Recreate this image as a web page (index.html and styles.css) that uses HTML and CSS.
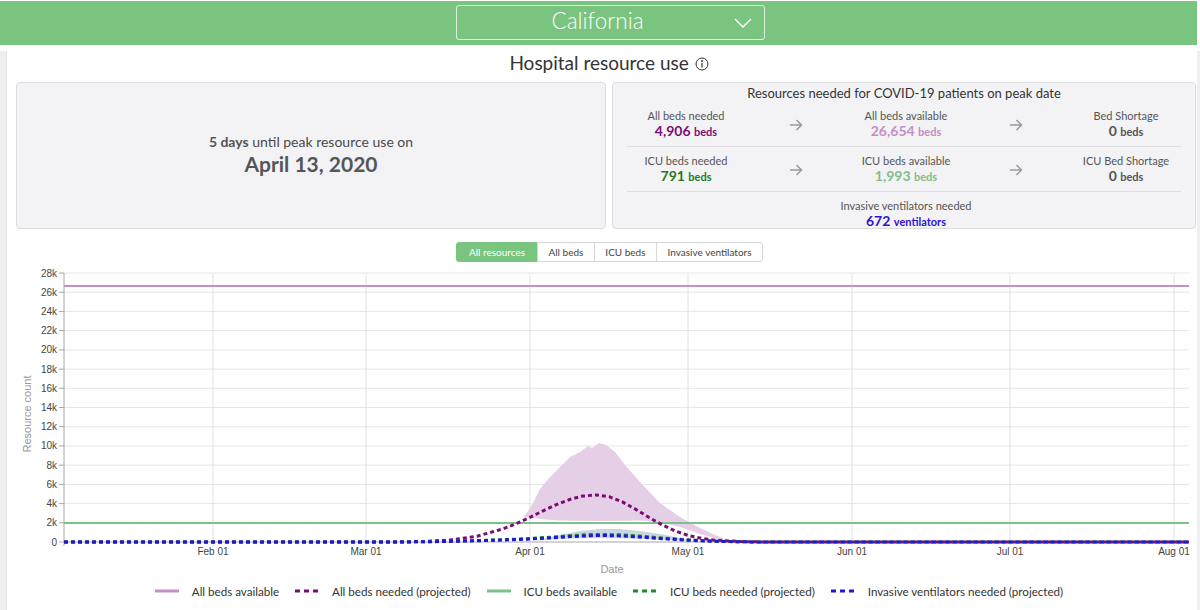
FILE: index.html
```html
<!DOCTYPE html>
<html lang="en">
<head>
<meta charset="utf-8">
<title>Hospital resource use</title>
<link rel="stylesheet" href="styles.css">
</head>
<body>
<div class="app">
  <header class="topbar">
    <div class="select">
      <span class="select-label">California</span>
      <svg class="chev" width="18" height="10" viewBox="0 0 18 10"><polyline points="1,1 9,9 17,1" fill="none" stroke="#fff" stroke-width="1.4"/></svg>
    </div>
  </header>
  <div class="main">
    <main class="panel">
      <h1 class="title">Hospital resource use
        <svg class="info" width="14" height="14" viewBox="0 0 14 14"><circle cx="7" cy="7" r="6" fill="none" stroke="#333" stroke-width="1"/><circle cx="7" cy="4" r="0.9" fill="#333"/><path d="M7 6V10.5" stroke="#333" stroke-width="1.2"/></svg>
      </h1>
      <section class="cards">
        <div class="card peak">
          <div class="peak-line"><b>5 days</b> until peak resource use on</div>
          <div class="peak-date">April 13, 2020</div>
        </div>
        <div class="card needs">
          <div class="needs-title">Resources needed for COVID-19 patients on peak date</div>
          <div class="row">
            <div class="stat"><div class="lbl">All beds needed</div><div class="val c-purple">4,906 <small>beds</small></div></div>
            <div class="arrow"><svg width="14" height="12" viewBox="0 0 14 12"><path d="M1 6H12.5M7.5 1L12.5 6L7.5 11" fill="none" stroke="#9a9a9a" stroke-width="1.5"/></svg></div>
            <div class="stat"><div class="lbl">All beds available</div><div class="val c-lpurple">26,654 <small>beds</small></div></div>
            <div class="arrow"><svg width="14" height="12" viewBox="0 0 14 12"><path d="M1 6H12.5M7.5 1L12.5 6L7.5 11" fill="none" stroke="#9a9a9a" stroke-width="1.5"/></svg></div>
            <div class="stat"><div class="lbl">Bed Shortage</div><div class="val c-gray">0 <small>beds</small></div></div>
          </div>
          <div class="row">
            <div class="stat"><div class="lbl">ICU beds needed</div><div class="val c-green">791 <small>beds</small></div></div>
            <div class="arrow"><svg width="14" height="12" viewBox="0 0 14 12"><path d="M1 6H12.5M7.5 1L12.5 6L7.5 11" fill="none" stroke="#9a9a9a" stroke-width="1.5"/></svg></div>
            <div class="stat"><div class="lbl">ICU beds available</div><div class="val c-lgreen">1,993 <small>beds</small></div></div>
            <div class="arrow"><svg width="14" height="12" viewBox="0 0 14 12"><path d="M1 6H12.5M7.5 1L12.5 6L7.5 11" fill="none" stroke="#9a9a9a" stroke-width="1.5"/></svg></div>
            <div class="stat"><div class="lbl">ICU Bed Shortage</div><div class="val c-gray">0 <small>beds</small></div></div>
          </div>
          <div class="row last">
            <div class="stat"><div class="lbl">Invasive ventilators needed</div><div class="val c-blue">672 <small>ventilators</small></div></div>
          </div>
        </div>
      </section>
      <nav class="tabs">
        <span class="tab active">All resources</span>
        <span class="tab">All beds</span>
        <span class="tab">ICU beds</span>
        <span class="tab">Invasive ventilators</span>
      </nav>
      <svg class="chart" width="1190" height="310" viewBox="7 265 1190 310">
        <path class="grid" d="M64 522.8H1189M64 503.6H1189M64 484.4H1189M64 465.1H1189M64 445.9H1189M64 426.7H1189M64 407.5H1189M64 388.3H1189M64 369.1H1189M64 349.9H1189M64 330.6H1189M64 311.4H1189M64 292.2H1189M64 273H1189"/>
        <path class="vgrid" d="M213 273V546M366 273V546M530 273V546M688 273V546M852 273V546M1010 273V546M1174 273V546"/>
        <path class="axis" d="M64 273V546M59 542H1189M59 522.8H64M59 503.6H64M59 484.4H64M59 465.1H64M59 445.9H64M59 426.7H64M59 407.5H64M59 388.3H64M59 369.1H64M59 349.9H64M59 330.6H64M59 311.4H64M59 292.2H64M59 273H64"/>
        <g class="ylab">
          <text x="57" y="545.5">0</text>
          <text x="57" y="526.3">2k</text>
          <text x="57" y="507.1">4k</text>
          <text x="57" y="487.9">6k</text>
          <text x="57" y="468.6">8k</text>
          <text x="57" y="449.4">10k</text>
          <text x="57" y="430.2">12k</text>
          <text x="57" y="411">14k</text>
          <text x="57" y="391.8">16k</text>
          <text x="57" y="372.6">18k</text>
          <text x="57" y="353.4">20k</text>
          <text x="57" y="334.1">22k</text>
          <text x="57" y="314.9">24k</text>
          <text x="57" y="295.7">26k</text>
          <text x="57" y="276.5">28k</text>
        </g>
        <g class="xlab">
          <text x="213" y="555">Feb 01</text>
          <text x="366" y="555">Mar 01</text>
          <text x="530" y="555">Apr 01</text>
          <text x="688" y="555">May 01</text>
          <text x="852" y="555">Jun 01</text>
          <text x="1010" y="555">Jul 01</text>
          <text x="1174" y="555">Aug 01</text>
        </g>
        <text class="axis-title" x="612" y="573">Date</text>
        <text class="axis-title" x="0" y="0" transform="translate(31 414) rotate(-90)">Resource count</text>

        <path class="band-all" d="M524 517L532 505L540 489L550 477L560 467L570 457L580 452L588 446L592 448L599 443L606 445L615 452L625 465L640 482L660 503L680 517L700 528L715 535L728 540L715 538.5L700 534L680 527L660 522L640 520.5L600 521L560 520.5L545 519.5L532 518Z"/>
        <path class="band-icu" d="M535 541L560 535L580 531L600 529L620 529L640 531L660 534L680 538L698 541.5L680 540.5L660 539.5L640 538.8L600 538L560 538.8Z"/>

        <path class="avail-all" d="M64 286H1189"/>
        <path class="avail-icu" d="M64 523H1189"/>

        <path class="need-all" d="M64 542L398 541.9L424.4 541.4L450.8 539.9L477.2 536.2L503.6 528.7L516.8 523.4L530 517.3L543.2 510.8L556.4 504.6L569.6 499.5L582.8 496.1L596 494.9L609.2 496.7L622.4 501.9L635.6 509.2L648.8 517.3L662 524.8L675.2 531L688.4 535.5L701.6 538.4L714.8 540.2L741.2 541.6L767.6 542L1189 542"/>
        <path class="need-icu" d="M64 542L400 542L440 541.5L480 540.4L510 539.4L530 538.5L550 537.2L570 535.7L590 534.6L605 534.4L620 534.8L640 536.1L660 537.8L680 539.3L700 540.5L720 541.4L750 541.9L780 542L1189 542"/>
        <path class="need-vent" d="M64 542L400 542L440 541.6L480 540.7L510 539.8L530 539L550 537.9L570 536.6L590 535.7L605 535.5L620 535.9L640 537L660 538.5L680 539.8L700 540.8L720 541.5L750 541.9L780 542L1189 542"/>
      </svg>
      <div class="legend">
        <span class="item"><svg width="24" height="4" viewBox="0 0 24 4"><path class="l-avail-all" d="M0 2H24"/></svg>All beds available</span>
        <span class="item"><svg width="24" height="4" viewBox="0 0 24 4"><path class="l-need-all" d="M0 2H24"/></svg>All beds needed (projected)</span>
        <span class="item"><svg width="24" height="4" viewBox="0 0 24 4"><path class="l-avail-icu" d="M0 2H24"/></svg>ICU beds available</span>
        <span class="item"><svg width="24" height="4" viewBox="0 0 24 4"><path class="l-need-icu" d="M0 2H24"/></svg>ICU beds needed (projected)</span>
        <span class="item"><svg width="24" height="4" viewBox="0 0 24 4"><path class="l-need-vent" d="M0 2H24"/></svg>Invasive ventilators needed (projected)</span>
      </div>
    </main>
  </div>
</div>
</body>
</html>
```

FILE: styles.css
```css
* { box-sizing: border-box; }
html, body { margin: 0; padding: 0; }
body {
  width: 1200px;
  height: 610px;
  overflow: hidden;
  background: #fff;
  font-family: Lato, "Noto Sans", "Liberation Sans", sans-serif;
  color: #333;
}
.app { width: 1200px; }

.topbar {
  margin-top: 1px;
  width: 1197px;
  height: 44px;
  background: #79c47f;
  display: flex;
  align-items: center;
  justify-content: center;
  padding-left: 24px;
  padding-bottom: 2px;
}
.select {
  width: 309px;
  height: 35px;
  border: 1px solid rgba(255,255,255,0.75);
  border-radius: 3px;
  display: flex;
  align-items: center;
  padding-right: 12px;
}
.select-label {
  flex: 1;
  text-align: center;
  color: #fff;
  font-size: 22.5px;
  font-weight: 300;
  line-height: 26px;
  padding-bottom: 3px;
  padding-left: 4px;
}
.chev { display: block; margin-top: 2px; }

.main {
  background: #efeff1;
  height: 565px;
}
.panel {
  margin-left: 6px;
  width: 1191px;
  height: 562px;
  background: #fff;
  border-left: 1px solid #e3e3e5;
}
.title {
  margin: 6px 0 0;
  padding-left: 14px;
  height: 24px;
  line-height: 24px;
  text-align: center;
  font-size: 19px;
  font-weight: 400;
  color: #333;
}
.info { vertical-align: -1px; margin-left: 1px; }

.cards {
  display: grid;
  grid-template-columns: 590px 584px;
  gap: 6px;
  margin: 7px 0 0 9px;
}
.card {
  height: 147px;
  background: #f3f3f5;
  border: 1px solid #dcdcde;
  border-radius: 4px;
}
.peak {
  display: flex;
  flex-direction: column;
  justify-content: center;
  align-items: center;
  padding-bottom: 3px;
}
.peak-line { font-size: 14px; line-height: 20px; color: #4a4a4a; }
.peak-line b { font-weight: 700; color: #555; }
.peak-date { font-size: 21px; line-height: 24px; font-weight: 700; color: #555; }

.needs { padding-top: 1px; }
.needs-title { font-size: 13px; line-height: 18px; text-align: center; color: #333; }
.row {
  display: grid;
  grid-template-columns: repeat(5, 1fr);
  margin: 0 14px;
  padding: 7px 0 6px 4px;
  border-bottom: 1px solid #dedee0;
}
.row.last { border-bottom: none; grid-template-columns: 1fr; }
.stat { text-align: center; }
.lbl { font-size: 11px; line-height: 13px; color: #555; }
.val { font-size: 14px; line-height: 16px; font-weight: 700; margin-top: 1px; }
.val small { font-size: 11px; font-weight: 700; }
.arrow { display: flex; align-items: center; justify-content: center; }
.c-purple { color: #7b0c74; }
.c-lpurple { color: #c48ec6; }
.c-gray { color: #555; }
.c-green { color: #1f7a28; }
.c-lgreen { color: #7fbf88; }
.c-blue { color: #2f12d2; }

.tabs {
  display: flex;
  justify-content: center;
  margin-top: 13px;
  padding-left: 16px;
  height: 20px;
}
.tab {
  font-size: 10px;
  line-height: 18px;
  height: 20px;
  padding: 0 10.5px;
  border: 1px solid #d6d6d8;
  margin-left: -1px;
  color: #444;
  background: #fff;
}
.tab:first-child { border-radius: 3px 0 0 3px; padding: 0 12px; }
.tab:last-child { border-radius: 0 3px 3px 0; }
.tab.active { background: #79c47f; border-color: #79c47f; color: #fff; }

.chart { display: block; margin-top: 3px; }
.grid { stroke: #e6e6e6; stroke-width: 1; fill: none; }
.vgrid { stroke: #e0e0e0; stroke-width: 1; fill: none; }
.axis { stroke: #a8a8a8; stroke-width: 1; fill: none; }
.ylab text { font: 10px "Liberation Sans", Arial, sans-serif; fill: #444; text-anchor: end; }
.xlab text { font: 10px "Liberation Sans", Arial, sans-serif; fill: #444; text-anchor: middle; }
.axis-title { font: 11px "Liberation Sans", Arial, sans-serif; fill: #999; text-anchor: middle; }
.band-all { fill: #e4cfe6; }
.band-icu { fill: #c3d0dd; opacity: 0.9; }
.avail-all { stroke: #c78fca; stroke-width: 2; fill: none; }
.avail-icu { stroke: #7dc189; stroke-width: 2; fill: none; }
.need-all { stroke: #7b0c74; stroke-width: 3; stroke-dasharray: 4 3; fill: none; }
.need-icu { stroke: #1f8a2a; stroke-width: 3; stroke-dasharray: 4 3; fill: none; }
.need-vent { stroke: #2016d8; stroke-width: 3; stroke-dasharray: 4 3; fill: none; }

.legend {
  height: 32px;
  display: flex;
  align-items: center;
  justify-content: center;
  padding-left: 14px;
  gap: 16px;
  font-size: 11.6px;
  color: #333;
}
.item { display: flex; align-items: center; gap: 13px; }
.item svg { display: block; }
.l-avail-all { stroke: #c78fca; stroke-width: 3; }
.l-avail-icu { stroke: #7dc189; stroke-width: 3; }
.l-need-all { stroke: #7b0c74; stroke-width: 3; stroke-dasharray: 5 4; }
.l-need-icu { stroke: #1f8a2a; stroke-width: 3; stroke-dasharray: 5 4; }
.l-need-vent { stroke: #2016d8; stroke-width: 3; stroke-dasharray: 5 4; }
```
